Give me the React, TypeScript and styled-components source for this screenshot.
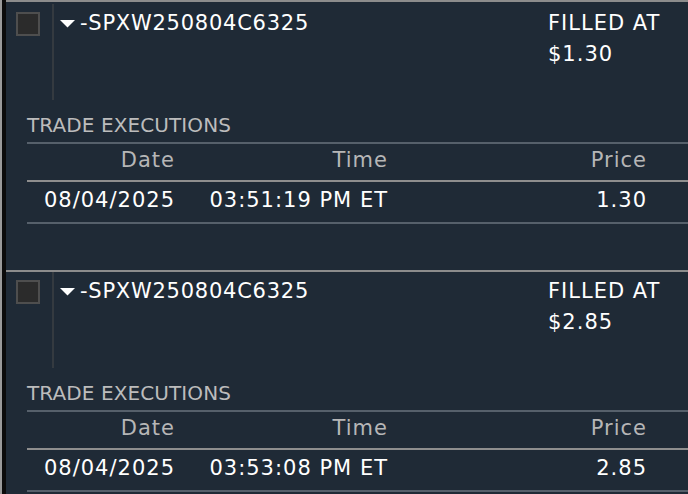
import styled, { createGlobalStyle } from "styled-components";

const GlobalStyle = createGlobalStyle`
  html, body {
    margin: 0;
    padding: 0;
    background: #1f2a36;
    overflow: hidden;
  }
  body {
    font-family: "DejaVu Sans", Verdana, sans-serif;
  }
`;

const Page = styled.div`
  display: flex;
  min-height: 100vh;
  background: #1f2a36;
`;

const Rail = styled.div`
  flex: 0 0 4px;
  border-left: 2px solid #9a9a9a;
  background: #0b0b0b;
`;

const List = styled.div`
  flex: 1;
  min-width: 0;
  border-top: 2px solid #8c8c8c;
`;

const Card = styled.div`
  height: 268px;
  box-sizing: border-box;
  &:first-child {
    padding-top: 2px;
  }
  & + & {
    border-top: 2px solid #8c8c8c;
  }
`;

const Header = styled.div`
  display: flex;
  height: 96px;
`;

const CheckCell = styled.div`
  flex: 0 0 48px;
  border-right: 2px solid #343a40;
  padding: 8px 0 0 10px;
  box-sizing: border-box;
`;

const CheckBox = styled.div`
  width: 24px;
  height: 24px;
  box-sizing: border-box;
  border: 2px solid #4e4e4e;
  background: #2b2b2b;
`;

const SymbolCell = styled.div`
  flex: 1;
  display: flex;
  align-items: flex-start;
  padding: 4px 0 0 6px;
`;

const Caret = styled.svg`
  flex: 0 0 auto;
  margin: 12px 5px 0 0;
`;

const Text = styled.span<{ $tight?: boolean }>`
  font-size: 21px;
  line-height: 31px;
  letter-spacing: ${(p) => (p.$tight ? "0.75px" : "1px")};
  color: #ffffff;
  white-space: nowrap;
`;

const FillCell = styled.div`
  flex: 0 0 140px;
  display: flex;
  flex-direction: column;
  padding-top: 4px;
`;

const SectionLabel = styled.div`
  margin: 13px 0 5px 21px;
  font-size: 20px;
  line-height: 24px;
  letter-spacing: 0.1px;
  color: #bcbcbc;
  white-space: nowrap;
`;

const Table = styled.div`
  margin-left: 21px;
  border-top: 2px solid #56606b;
  border-bottom: 2px solid #56606b;
`;

const Row = styled.div<{ $head?: boolean }>`
  display: grid;
  grid-template-columns: 163px 213px 259px 1fr;
  padding: ${(p) => (p.$head ? "4px 0 8px" : "6px 0 10px")};
  border-bottom: ${(p) => (p.$head ? "2px solid #8e8e8e" : "none")};
`;

const Cell = styled.div<{ $muted?: boolean }>`
  padding-right: 15px;
  text-align: right;
  font-size: 21px;
  line-height: 24px;
  letter-spacing: 1px;
  white-space: nowrap;
  color: ${(p) => (p.$muted ? "#b6b6b6" : "#ffffff")};
`;

type Order = {
  symbol: string;
  fill: string;
  date: string;
  time: string;
  price: string;
};

const orders: Order[] = [
  {
    symbol: "-SPXW250804C6325",
    fill: "$1.30",
    date: "08/04/2025",
    time: "03:51:19 PM ET",
    price: "1.30",
  },
  {
    symbol: "-SPXW250804C6325",
    fill: "$2.85",
    date: "08/04/2025",
    time: "03:53:08 PM ET",
    price: "2.85",
  },
];

function OrderCard({ order }: { order: Order }) {
  return (
    <Card>
      <Header>
        <CheckCell>
          <CheckBox />
        </CheckCell>
        <SymbolCell>
          <Caret width="15" height="8" viewBox="0 0 15 8">
            <polygon points="0,0 15,0 7.5,7.5" fill="#ffffff" />
          </Caret>
          <Text $tight>{order.symbol}</Text>
        </SymbolCell>
        <FillCell>
          <Text>FILLED AT</Text>
          <Text>{order.fill}</Text>
        </FillCell>
      </Header>
      <SectionLabel>TRADE EXECUTIONS</SectionLabel>
      <Table>
        <Row $head>
          <Cell $muted>Date</Cell>
          <Cell $muted>Time</Cell>
          <Cell $muted>Price</Cell>
          <Cell />
        </Row>
        <Row>
          <Cell>{order.date}</Cell>
          <Cell>{order.time}</Cell>
          <Cell>{order.price}</Cell>
          <Cell />
        </Row>
      </Table>
    </Card>
  );
}

export default function App() {
  return (
    <>
      <GlobalStyle />
      <Page>
        <Rail />
        <List>
          {orders.map((order, i) => (
            <OrderCard key={i} order={order} />
          ))}
        </List>
      </Page>
    </>
  );
}
